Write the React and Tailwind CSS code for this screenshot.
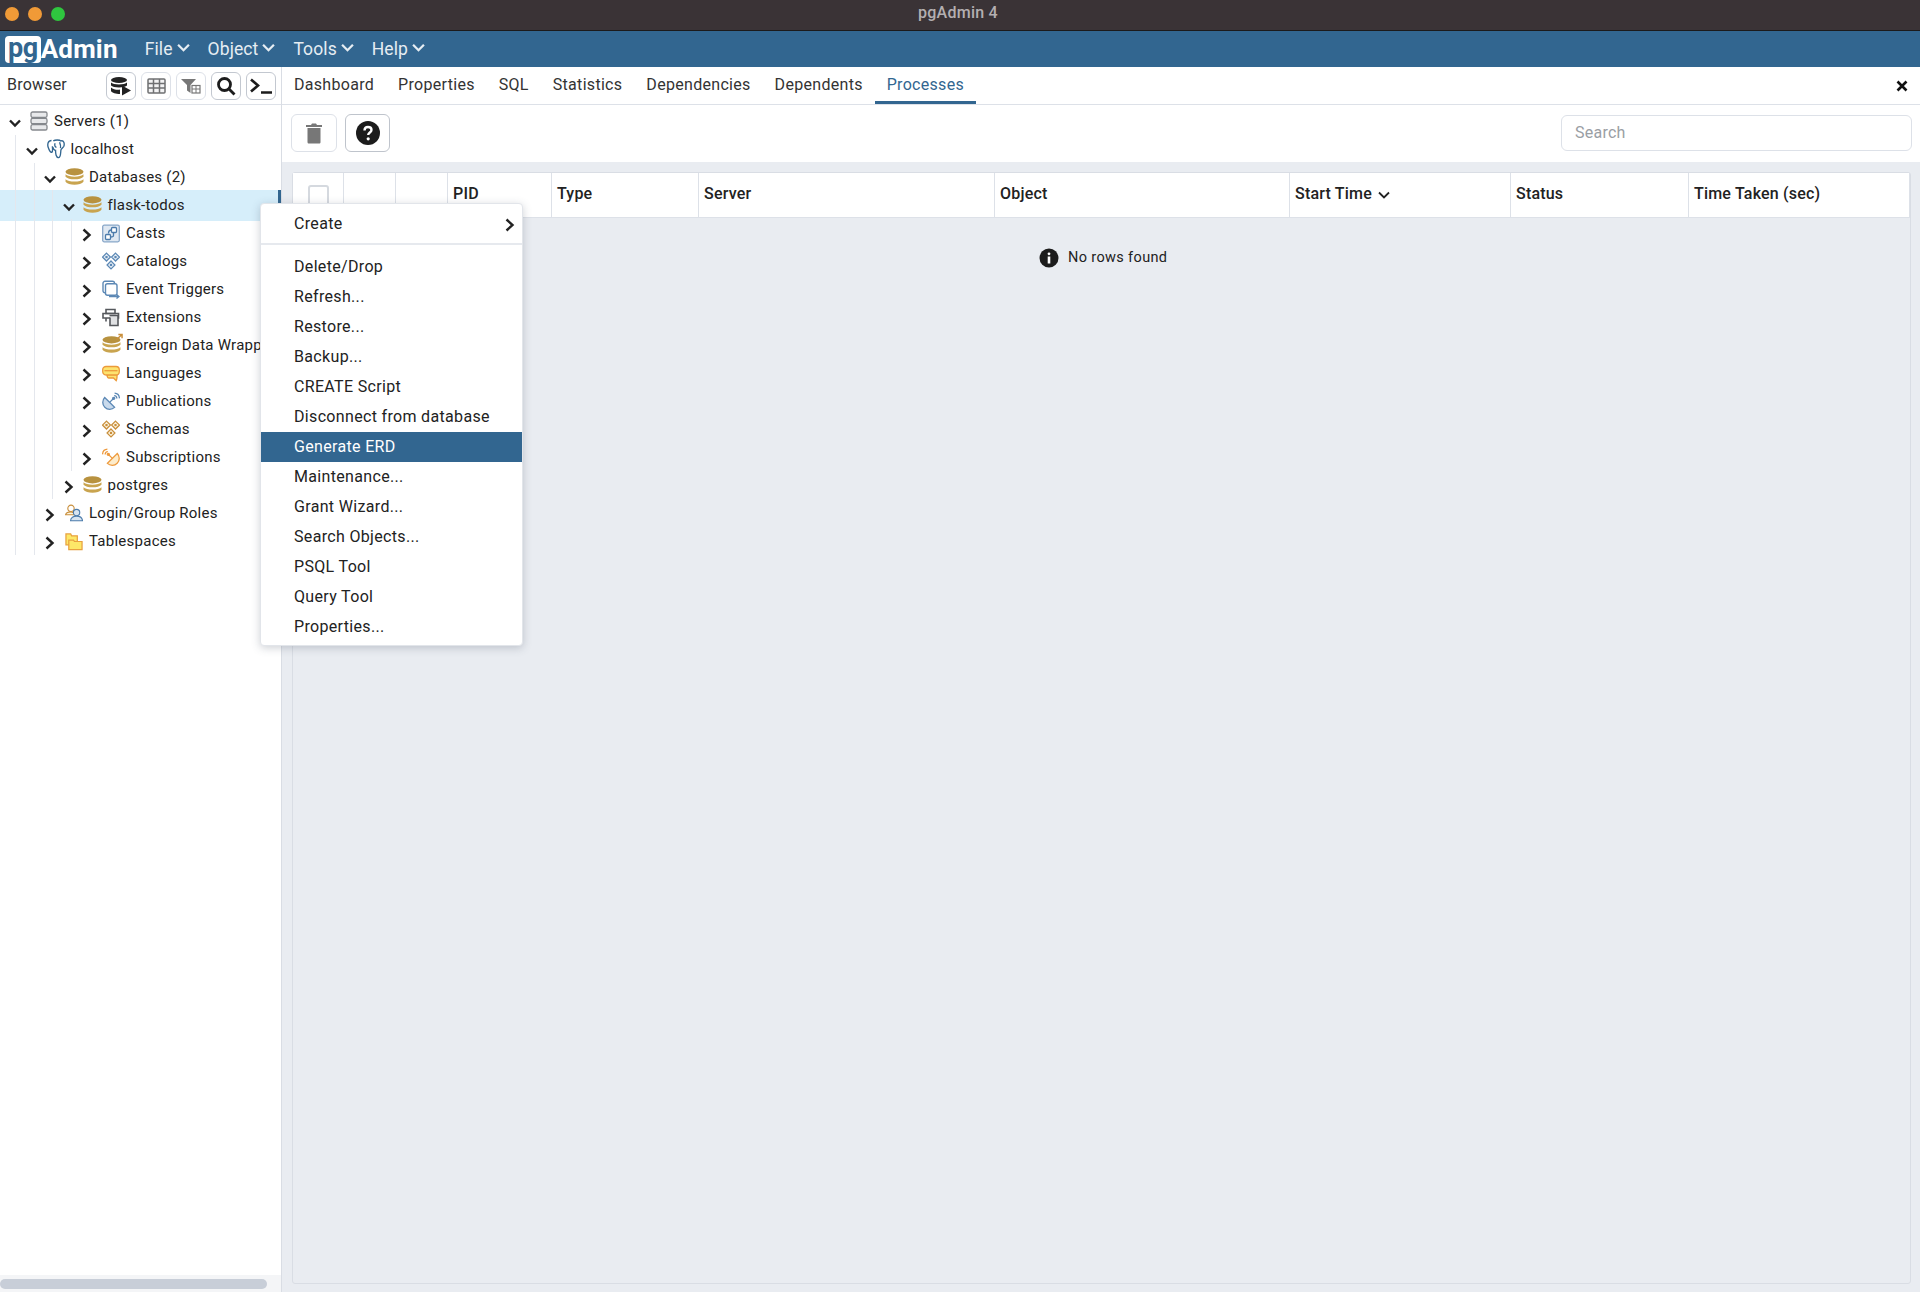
import React from "react"

const Down = ({ className = "", w = 12, sw = 2.4 }) => (
  <svg width={w} height={w} viewBox="0 0 12 12" fill="none" stroke="currentColor" strokeWidth={sw} className={className}>
    <path d="M1 3.5 L6 8.5 L11 3.5" />
  </svg>
)

const Right = ({ className = "" }) => (
  <svg width="12" height="14" viewBox="0 0 12 14" fill="none" stroke="currentColor" strokeWidth="2.4" className={className}>
    <path d="M2.5 1.5 L8.5 7 L2.5 12.5" />
  </svg>
)

const Db = ({ arrow }) => (
  <svg width="19" height="18" viewBox="0 0 18 17" className="overflow-visible">
    <ellipse cx="9" cy="3.6" rx="8.5" ry="3.4" fill="#b8923f" />
    <path d="M0.5 6 C3 9 15 9 17.5 6 V8.2 C15 11.4 3 11.4 0.5 8.2Z" fill="#c9a44f" />
    <path d="M0.5 10.6 C3 13.6 15 13.6 17.5 10.6 V13 C15 16.8 3 16.8 0.5 13Z" fill="#c9a44f" />
    {arrow && <path d="M13.5 3.5 L18.5 -1 M15.5 -1.5 H19 V2" stroke="#c98f3c" strokeWidth="1.4" fill="none" />}
  </svg>
)

const ServersIcon = () => (
  <svg width="18" height="20" viewBox="0 0 18 20" fill="#e8e9eb" stroke="#85888d" strokeWidth="1.3">
    <rect x="1" y="1" width="16" height="5.4" rx="1.6" />
    <rect x="1" y="7.3" width="16" height="5.4" rx="1.6" />
    <rect x="1" y="13.6" width="16" height="5.4" rx="1.6" />
  </svg>
)

const Elephant = () => (
  <svg width="20" height="22" viewBox="0 0 20 22" fill="none" stroke="#336791" strokeWidth="1.5">
    <path d="M5 1.5 C1 1.5 0.3 6 1.3 9 C2.3 12 4 15.5 5.5 14.5 C6.7 13.5 6 10 6 8 M7 2 C9 0.7 14 0.7 15.5 2 C18.7 1 19.7 5 18.7 8 C17.7 10 16 10.5 15.5 12 C15 15 15.5 20 13 20.5 C10 21 9.5 16 9.5 12.5 C8 12.5 7 11 6.5 9" />
    <path d="M9 4.5 C8 7 9 9 10.5 9 M14 3.5 C15 6 15.5 8 15 10" />
  </svg>
)

const Casts = () => (
  <svg width="19" height="19" viewBox="0 0 18 18" fill="none" stroke="#4b7bab" strokeWidth="1.3">
    <rect x="0.7" y="0.7" width="16.6" height="16.6" rx="1.5" fill="#dfe8f2" stroke="#87a6c8" />
    <rect x="9.5" y="3" width="5" height="5" rx="1" fill="#fff" />
    <rect x="3.5" y="10" width="5" height="5" rx="1" fill="#fff" />
    <path d="M6.5 9 C6.5 6.5 8 5.5 9.5 5.5 M11.5 8 V11 C11.5 12 10 12.5 8.5 12.5" />
  </svg>
)

const Diamonds = ({ stroke, fill }) => (
  <svg width="19" height="18" viewBox="1 0.5 16 15" fill={fill} stroke={stroke} strokeWidth="1.1">
    <path d="M5 1 L8.5 4.5 L5 8 L1.5 4.5Z" />
    <path d="M13 1 L16.5 4.5 L13 8 L9.5 4.5Z" />
    <path d="M9 8 L12.5 11.5 L9 15 L5.5 11.5Z" />
    <rect x="4" y="3.5" width="2" height="2" fill={stroke} stroke="none" />
    <rect x="12" y="3.5" width="2" height="2" fill={stroke} stroke="none" />
    <rect x="8" y="10.5" width="2" height="2" fill={stroke} stroke="none" />
  </svg>
)

const Triggers = () => (
  <svg width="19" height="19" viewBox="0 0 18 18" fill="none" stroke="#5c88b5" strokeWidth="1.4">
    <rect x="1" y="0.8" width="11.5" height="11.5" rx="2" />
    <rect x="3.5" y="3.3" width="11.5" height="11.5" rx="2" fill="#fff" />
    <path d="M7 16 H16.5 M14.5 14 L17 16 L14.5 18" />
  </svg>
)

const Extensions = () => (
  <svg width="19" height="19" viewBox="0 0 18 18" fill="none" stroke="#55585c" strokeWidth="1.6">
    <path d="M4 1 H13 V5 H4Z" />
    <path d="M1 5 H16.5 V9.5 H1Z" />
    <path d="M4 9.5 V13 M7.5 7 H16 V17 H8 V9" fill="#e0e1e3" />
  </svg>
)

const Languages = () => (
  <svg width="19" height="17" viewBox="0 0 18 16" fill="#fde36f" stroke="#ec9a3a" strokeWidth="1.3">
    <path d="M5 9 H15 V12 C15 12 14.8 14 14.2 15.2 L11.5 12.5 H7 C6 12.5 5 11 5 9Z" />
    <path d="M4 1 H14 C16 1 17.3 2.5 17.3 4.5 V6 C17.3 8 16 9.5 14 9.5 H5 C2.5 9.5 0.7 8.5 0.7 6 V4 C0.7 2 2.5 1 4 1Z" />
    <path d="M2.5 5.2 H15.5" />
  </svg>
)

const Dish = ({ color, fill, flip }) => (
  <svg width="21" height="21" viewBox="0 0 20 20" fill="none" stroke={color} strokeWidth="1.4" className={flip ? "-scale-x-100" : ""}>
    <path d="M3 5.5 L14 16.5 A7.78 7.78 0 0 1 3 5.5Z" fill={fill} />
    <path d="M8.5 11 L12.5 7" />
    <circle cx="13" cy="6.5" r="1.2" fill={color} />
    <path d="M13.5 3.5 C15.5 3.5 16.5 5 16.5 6.8 M14 0.8 C17 1 19.2 3.2 19.4 6.5" />
  </svg>
)

const Roles = () => (
  <svg width="21" height="20" viewBox="0 0 21 20" fill="#fff">
    <circle cx="7" cy="4.5" r="3.7" stroke="#c98f3c" strokeWidth="1.3" />
    <path d="M0.7 12 C1.5 9.5 4 8.7 7 8.7 C9 8.7 10 9.5 11 11 V12 H0.7Z" stroke="#c98f3c" strokeWidth="1.3" fill="#fdf6e3" />
    <circle cx="13.5" cy="9.5" r="3.7" stroke="#4b7bab" strokeWidth="1.3" fill="#d7e4f1" />
    <path d="M6.5 19 C6.5 15 10 13.7 13.5 13.7 C17 13.7 20 15 20.5 19Z" stroke="#4b7bab" strokeWidth="1.3" fill="#d7e4f1" />
  </svg>
)

const Folders = () => (
  <svg width="19" height="19" viewBox="0 0 19 19" fill="#fde868" stroke="#e8a13f" strokeWidth="1.3">
    <path d="M1 1.5 H6 L7 3.5 H13 V13 H1Z" />
    <path d="M4 8 H9 L10 9.5 H18 V18 H4Z" />
  </svg>
)

const rows = [
  { label: "Servers (1)", depth: 0, open: true, icon: <ServersIcon /> },
  { label: "localhost", depth: 1, open: true, icon: <Elephant /> },
  { label: "Databases (2)", depth: 2, open: true, icon: <Db /> },
  { label: "flask-todos", depth: 3, open: true, icon: <Db />, selected: true },
  { label: "Casts", depth: 4, icon: <Casts /> },
  { label: "Catalogs", depth: 4, icon: <Diamonds stroke="#5c88b5" fill="#eaf0f7" /> },
  { label: "Event Triggers", depth: 4, icon: <Triggers /> },
  { label: "Extensions", depth: 4, icon: <Extensions /> },
  { label: "Foreign Data Wrappers", depth: 4, icon: <Db arrow /> },
  { label: "Languages", depth: 4, icon: <Languages /> },
  { label: "Publications", depth: 4, icon: <Dish color="#5c88b5" fill="#c9daec" /> },
  { label: "Schemas", depth: 4, icon: <Diamonds stroke="#c98f3c" fill="#fdf6e3" /> },
  { label: "Subscriptions", depth: 4, icon: <Dish color="#ee9a3d" fill="#fdeccb" flip /> },
  { label: "postgres", depth: 3, icon: <Db /> },
  { label: "Login/Group Roles", depth: 2, icon: <Roles /> },
  { label: "Tablespaces", depth: 2, icon: <Folders /> },
]

function TreeRow({ row }) {
  const guides = Array.from({ length: row.depth })
  return (
    <div
      className={
        row.selected
          ? "flex items-center h-[31px] -my-[1.5px] bg-[#d6eefa] border-r-[3px] border-[#326690] whitespace-nowrap"
          : "flex items-center h-[28px] whitespace-nowrap"
      }
    >
      {row.depth > 0 && <span className="w-[15px] shrink-0" />}
      {guides.map((_, i) => (
        <span key={i} className="w-[18.5px] shrink-0 self-stretch border-l border-[#e4e7ed]" />
      ))}
      <span className={row.depth > 0 ? "-ml-[8px] mr-[9px] mt-[3px] w-[12px] shrink-0 flex justify-center" : "ml-[9px] mr-[9px] mt-[3px] w-[12px] shrink-0 flex justify-center"}>
        {row.open ? <Down className="text-[#222]" /> : <Right className="text-[#222]" />}
      </span>
      <span className="w-[18px] shrink-0 flex justify-center">{row.icon}</span>
      <span className="ml-[6px] text-[15px] tracking-[0.25px] text-[#222]">{row.label}</span>
    </div>
  )
}

const ToolBtn = ({ children, dark }) => (
  <button className={dark ? "w-[30px] h-[28px] flex items-center justify-center bg-white border border-[#c3c8d0] rounded-md" : "w-[30px] h-[28px] flex items-center justify-center bg-white border border-[#dde1e8] rounded-md"}>{children}</button>
)

const columns = [
  { w: "w-[51px]" },
  { w: "w-[52px]" },
  { w: "w-[52px]" },
  { w: "w-[104px]", label: "PID" },
  { w: "w-[147px]", label: "Type" },
  { w: "w-[296px]", label: "Server" },
  { w: "w-[295px]", label: "Object" },
  { w: "w-[221px]", label: "Start Time", sort: true },
  { w: "w-[178px]", label: "Status" },
  { w: "flex-1", label: "Time Taken (sec)" },
]

const tabs = ["Dashboard", "Properties", "SQL", "Statistics", "Dependencies", "Dependents"]

const menuItems = ["Delete/Drop", "Refresh...", "Restore...", "Backup...", "CREATE Script", "Disconnect from database", "Generate ERD", "Maintenance...", "Grant Wizard...", "Search Objects...", "PSQL Tool", "Query Tool", "Properties..."]

export default function App() {
  return (
    <div className="relative w-[1920px] h-[1292px] overflow-hidden flex flex-col bg-white font-['Roboto',sans-serif]">
      {/* mac title bar */}
      <div className="relative h-[31px] shrink-0 flex items-center justify-center bg-[#3a3336] border-b border-[#1c1a1b]">
        <div className="absolute left-[5px] top-[7px] flex gap-[9px]">
          <span className="w-[14px] h-[14px] rounded-full bg-[#f09a37]" />
          <span className="w-[14px] h-[14px] rounded-full bg-[#f09a37]" />
          <span className="w-[14px] h-[14px] rounded-full bg-[#2fc63f]" />
        </div>
        <span className="text-[16px] font-medium text-[#b4afb1] -mt-[4px] mr-[4px] tracking-[0.25px]">pgAdmin 4</span>
      </div>

      {/* menu bar */}
      <div className="h-[36px] shrink-0 flex items-center bg-[#326690] text-[#e6edf3]">
        <div className="ml-[5px] flex items-center">
          <span className="h-[27px] px-[3px] bg-white rounded-[4px] text-[#326690] text-[27px] leading-[24px] font-bold tracking-[-0.5px]">pg</span>
          <span className="text-white text-[26px] font-bold leading-none tracking-[0.2px]">Admin</span>
        </div>
        <div className="ml-[27px] flex items-center text-[17.5px] tracking-[0.1px]">
          <span className="flex items-center">File<Down className="ml-[4px] -mt-[3px]" w={13} sw={2.1} /></span>
          <span className="flex items-center ml-[18px]">Object<Down className="ml-[4px] -mt-[3px]" w={13} sw={2.1} /></span>
          <span className="flex items-center ml-[18px]">Tools<Down className="ml-[4px] -mt-[3px]" w={13} sw={2.1} /></span>
          <span className="flex items-center ml-[18px]">Help<Down className="ml-[4px] -mt-[3px]" w={13} sw={2.1} /></span>
        </div>
      </div>

      <div className="flex-1 flex min-h-0">
        {/* browser panel */}
        <aside className="w-[282px] shrink-0 flex flex-col border-r border-[#d9dde4]">
          <div className="h-[38px] shrink-0 flex items-center border-b border-[#dde1e8]">
            <span className="ml-[7px] pb-[2px] text-[16px] tracking-[0.2px] text-[#333]">Browser</span>
            <div className="ml-auto mr-[5px] flex gap-[5px]">
              <ToolBtn dark>
                <svg width="22" height="20" viewBox="0 0 22 20" fill="#222">
                  <ellipse cx="9" cy="4" rx="8" ry="3" />
                  <path d="M1 6.5 C3 9 15 9 17 6.5 V9.5 C15 12 3 12 1 9.5Z" />
                  <path d="M1 11.5 C3 14 9 14 10 13.5 V18 C6 18 2 17 1 15Z" />
                  <path d="M12 9.5 L21 14.5 L12 19.5Z" />
                </svg>
              </ToolBtn>
              <ToolBtn>
                <svg width="19" height="16" viewBox="0 0 19 16" fill="none" stroke="#6f7072" strokeWidth="1.5">
                  <rect x="1" y="1" width="17" height="14" rx="1" fill="#f3f3f4" />
                  <path d="M1 5.5 H18 M1 10 H18 M6.5 1 V15 M12.5 1 V15" />
                </svg>
              </ToolBtn>
              <ToolBtn>
                <svg width="20" height="16" viewBox="0 0 20 16">
                  <path d="M0 1 H15 L9.5 7 V15 L6 12.5 V7Z" fill="#777" />
                  <rect x="11" y="7.5" width="8" height="7.5" fill="#fff" stroke="#777" strokeWidth="1.2" />
                  <path d="M11 11 H19 M15 7.5 V15" stroke="#777" strokeWidth="1" />
                </svg>
              </ToolBtn>
              <ToolBtn dark>
                <svg width="20" height="20" viewBox="0 0 20 20" fill="none" stroke="#1c1c1c" strokeWidth="2.8">
                  <circle cx="8.5" cy="8.5" r="6" />
                  <path d="M13 13 L18.5 18.5" />
                </svg>
              </ToolBtn>
              <ToolBtn dark>
                <svg width="24" height="18" viewBox="0 0 24 18" fill="none" stroke="#1c1c1c" strokeWidth="2.6">
                  <path d="M2 2.5 L9 8.5 L2 14.5 M12 15.5 H23" />
                </svg>
              </ToolBtn>
            </div>
          </div>
          <div className="flex-1 pt-[2px] overflow-hidden">
            {rows.map((row) => (
              <TreeRow key={row.label} row={row} />
            ))}
          </div>
          <div className="h-[17px] shrink-0 flex items-center bg-[#f4f5f7]">
            <span className="w-[267px] h-[10px] rounded-full bg-[#c8ced8]" />
          </div>
        </aside>

        {/* main panel */}
        <main className="flex-1 min-w-0 flex flex-col bg-[#e9ecf1]">
          <div className="h-[38px] shrink-0 flex items-stretch pl-[12px] bg-white border-b border-[#dde1e8] text-[16px] tracking-[0.3px] text-[#333]">
            {tabs.map((t) => (
              <span key={t} className="mr-[24px] pb-[2px] flex items-center">{t}</span>
            ))}
            <span className="-ml-[12px] px-[12px] pt-[1px] flex items-center text-[#326690] border-b-[3px] border-[#326690]">Processes</span>
            <svg width="12" height="12" viewBox="0 0 12 12" fill="none" stroke="#111" strokeWidth="2.6" className="ml-auto mr-[12px] self-center">
              <path d="M1.5 1.5 L10.5 10.5 M10.5 1.5 L1.5 10.5" />
            </svg>
          </div>
          <div className="h-[57px] shrink-0 flex items-center bg-white pl-[9px] pr-[8px] pb-[2px]">
            <button className="w-[46px] h-[38px] flex items-center justify-center border border-[#dde1e8] rounded-md">
              <svg width="18" height="22" viewBox="0 0 18 22" fill="#777">
                <path d="M1 3 H6 L7 1.5 H11 L12 3 H17 V5 H1Z" />
                <path d="M2.5 6 H15.5 V20 C15.5 21 15 21.5 14 21.5 H4 C3 21.5 2.5 21 2.5 20Z" />
              </svg>
            </button>
            <button className="ml-[8px] w-[45px] h-[38px] flex items-center justify-center border border-[#bfc4cc] rounded-md">
              <svg width="24" height="24" viewBox="0 0 24 24">
                <circle cx="12" cy="12" r="12" fill="#1c1c1c" />
                <path d="M8.5 9.5 C8.5 7 10 6 12 6 C14.2 6 15.5 7.4 15.5 9 C15.5 11.5 12.2 11.5 12.2 14" fill="none" stroke="#fff" strokeWidth="2.4" />
                <circle cx="12.2" cy="17.8" r="1.6" fill="#fff" />
              </svg>
            </button>
            <div className="ml-auto w-[351px] h-[36px] flex items-center pl-[13px] text-[16px] tracking-[0.25px] text-[#9a9ea4] bg-white border border-[#dde1e8] rounded-md">Search</div>
          </div>
          <div className="flex-1 ml-[10px] mr-[9px] mt-[10px] mb-[8px] border border-[#d9dde4] rounded-[3px] min-h-0">
            <div className="h-[45px] flex bg-white border-b border-[#dde1e8] text-[16px] font-medium tracking-[0.2px] text-[#222]">
              {columns.map((c, i) => (
                <div key={i} className={c.w + " flex items-center pl-[5px] pb-[2px] border-r border-[#dde1e8]"}>
                  {i === 0 && <span className="ml-[10px] mt-[2px] w-[21px] h-[21px] border-2 border-[#d5d9df] rounded-[3px]" />}
                  {c.label}
                  {c.sort && <Down className="ml-[6px] mt-[2px] text-[#222]" w={12} sw={1.8} />}
                </div>
              ))}
            </div>
            <div className="mt-[29px] pl-[746px] flex items-center text-[14.5px] tracking-[0.36px] text-[#222]">
              <svg width="20" height="20" viewBox="0 0 20 20">
                <circle cx="10" cy="10" r="9.5" fill="#1c1c1c" />
                <circle cx="10" cy="5.8" r="1.4" fill="#fff" />
                <rect x="8.7" y="8.5" width="2.6" height="7" fill="#fff" />
              </svg>
              <span className="ml-[9px]">No rows found</span>
            </div>
          </div>
        </main>
      </div>

      {/* context menu */}
      <div className="absolute left-[260px] top-[203px] w-[263px] h-[443px] bg-white rounded-[4px] border border-[#e2e5ea] shadow-[0_2px_8px_rgba(60,70,90,0.25)] text-[16px] tracking-[0.33px] text-[#222]">
        <div className="h-[41px] flex items-center justify-between pl-[33px] pr-[6px] border-b-2 border-[#e6e9ee]">
          Create
          <Right className="text-[#222] mt-[3px]" />
        </div>
        <div className="pt-[7px]">
          {menuItems.map((m) => (
            <div key={m} className={m === "Generate ERD" ? "h-[30px] flex items-center pl-[33px] bg-[#326690] text-white" : "h-[30px] flex items-center pl-[33px]"}>{m}</div>
          ))}
        </div>
      </div>
    </div>
  )
}
